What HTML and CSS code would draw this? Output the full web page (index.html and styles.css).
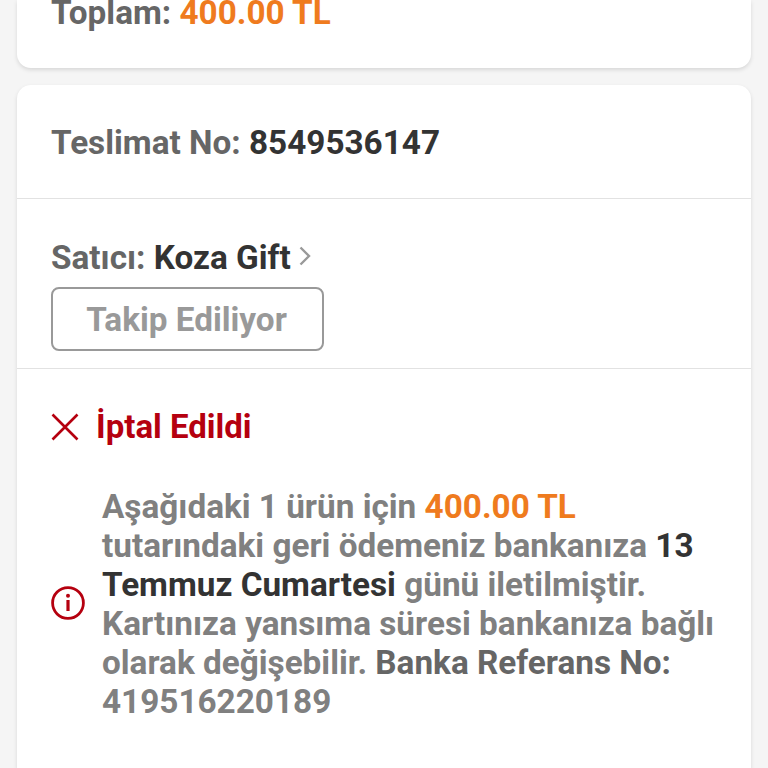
FILE: index.html
```html
<!DOCTYPE html>
<html lang="tr">
<head>
<meta charset="UTF-8" />
<meta name="viewport" content="width=device-width, initial-scale=1" />
<title>Sipariş Detayı</title>
<link rel="stylesheet" href="styles.css">
</head>
<body>

<section class="card card-toplam">
  <p class="row-text">Toplam: <span class="orange">400.00 TL</span></p>
</section>

<section class="card card-teslimat">
  <div class="teslimat-no">
    <p class="row-text">Teslimat No: <span class="dark">8549536147</span></p>
  </div>

  <div class="satici">
    <p class="row-text satici-ad">
      <span>Satıcı: <span class="dark">Koza Gift</span></span>
      <svg class="chevron" width="14" height="22" viewBox="0 0 14 22"><path d="M2.5 2.5 L11 11 L2.5 19.5" fill="none" stroke="#999" stroke-width="2.4"/></svg>
    </p>
    <button class="takip-btn">Takip Ediliyor</button>
  </div>

  <div class="durum">
    <div class="iptal">
      <svg width="28" height="28" viewBox="0 0 28 28"><path d="M1.5 1.5 L26.5 26.5 M26.5 1.5 L1.5 26.5" fill="none" stroke="#b5000f" stroke-width="2.6"/></svg>
      <span>İptal Edildi</span>
    </div>

    <div class="iade">
      <svg class="info-icon" width="34" height="34" viewBox="0 0 34 34">
        <circle cx="17" cy="17" r="15.4" fill="none" stroke="#b5000f" stroke-width="2.8"/>
        <circle cx="17" cy="9.8" r="2" fill="#b5000f"/>
        <path d="M17 14 V25" stroke="#b5000f" stroke-width="3.2"/>
      </svg>
      <p class="iade-text">Aşağıdaki 1 ürün için <span class="orange">400.00 TL</span> tutarındaki geri ödemeniz bankanıza <span class="dark">13 Temmuz Cumartesi</span> günü iletilmiştir. Kartınıza yansıma süresi bankanıza bağlı olarak değişebilir. <span class="ref">Banka Referans No:</span> 419516220189</p>
    </div>
  </div>
</section>

</body>
</html>
```

FILE: styles.css
```css
:root {
  --gray-text: #666;
  --gray-light: #808080;
  --dark-text: #333;
  --orange: #ef7b1e;
  --red: #b5000f;
  --line: #e2e2e2;
}
html, body {
  height: 100%;
}
body {
  margin: 0;
  padding: 0 17px;
  box-sizing: border-box;
  overflow: hidden;
  display: flex;
  flex-direction: column;
  background: #f5f5f5;
  font-family: Roboto, "Noto Sans", sans-serif;
  font-weight: 700;
}
p {
  margin: 0;
}
.card {
  background: white;
  border-radius: 14px;
  box-shadow: 0 2px 4px rgba(0, 0, 0, 0.12);
}
.card-toplam {
  height: 68px;
  flex-shrink: 0;
  padding: 0 34px;
  box-sizing: border-box;
  overflow: hidden;
  border-radius: 0 0 14px 14px;
}
.card-toplam .row-text {
  margin-top: -6px;
}
.card-teslimat {
  margin-top: 17px;
  flex-grow: 1;
  border-radius: 14px 14px 0 0;
  overflow: hidden;
}
.row-text {
  font-size: 33.3px;
  line-height: 38px;
  color: var(--gray-text);
  white-space: nowrap;
}
.orange {
  color: var(--orange);
}
.dark {
  color: var(--dark-text);
}
.teslimat-no {
  height: 114px;
  padding: 39px 34px 0;
  box-sizing: border-box;
  border-bottom: 1px solid var(--line);
}
.satici {
  height: 170px;
  padding: 40px 34px 0;
  box-sizing: border-box;
  border-bottom: 1px solid var(--line);
}
.satici-ad {
  display: flex;
  align-items: center;
  gap: 7px;
}
.chevron {
  margin-top: -4px;
}
.takip-btn {
  display: block;
  width: 273px;
  height: 64px;
  margin-top: 10px;
  padding: 0 2px 0 0;
  background: white;
  border: 2px solid #999;
  border-radius: 8px;
  color: #999;
  font-family: inherit;
  font-size: 33.3px;
  font-weight: 700;
}
.durum {
  padding: 38px 28px 0 34px;
}
.iptal {
  display: flex;
  align-items: center;
  gap: 17px;
  color: var(--red);
  font-size: 33px;
  line-height: 40px;
}
.iade {
  display: flex;
  align-items: center;
  gap: 17px;
  margin-top: 40px;
}
.info-icon {
  flex-shrink: 0;
  margin-top: -2px;
}
.iade-text {
  font-size: 33.3px;
  line-height: 39px;
  color: var(--gray-light);
}
.ref {
  color: var(--gray-text);
}
```
